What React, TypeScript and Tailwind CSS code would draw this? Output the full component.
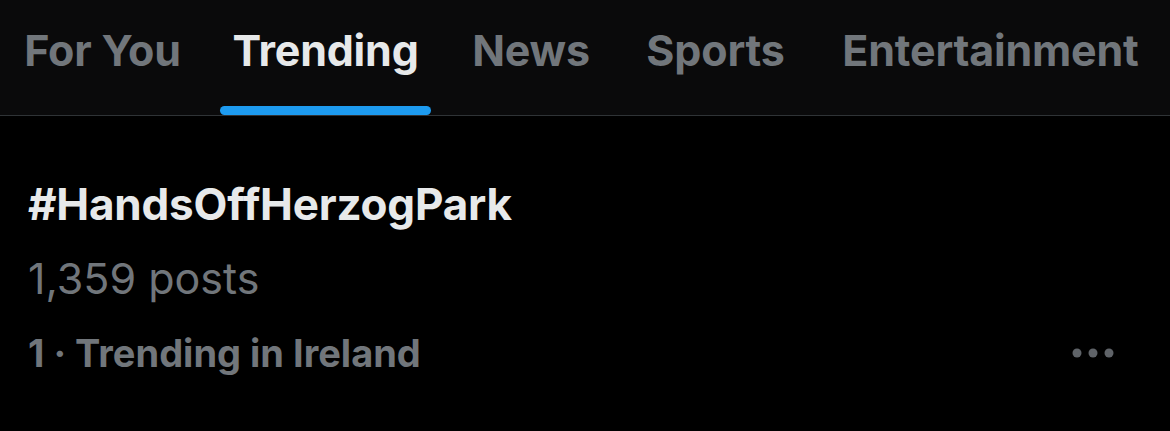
const TABS = [
  { label: "For You", width: "w-[205px]" },
  { label: "Trending", width: "w-[241px]", active: true },
  { label: "News", width: "w-[170px]" },
  { label: "Sports", width: "w-[199px]" },
  { label: "Entertainment", width: "w-[351px]" },
];

function MoreIcon() {
  return (
    <svg width="44" height="12" viewBox="0 0 44 12" fill="#5f6368">
      <circle cx="6" cy="6" r="4.5" />
      <circle cx="22" cy="6" r="4.5" />
      <circle cx="38" cy="6" r="4.5" />
    </svg>
  );
}

export default function App() {
  return (
    <div className="w-[1170px] h-[431px] bg-black overflow-hidden font-['Inter',sans-serif]">
      {/* Tabs */}
      <div className="bg-[#0a0a0b] border-b border-[#2f3336] flex h-[116px]">
        {TABS.map((tab) => (
          <div key={tab.label} className={`${tab.width} flex flex-col items-center`}>
            <div
              className={`pt-[24px] h-[106px] text-[43px] font-bold tracking-[-0.2px] leading-[52px] ${
                tab.active ? "text-[#e7e9ea]" : "text-[#71767b]"
              }`}
            >
              {tab.label}
            </div>
            {tab.active && <div className="w-[211px] h-[9px] rounded-full bg-[#1d9bf0]" />}
          </div>
        ))}
      </div>

      {/* Trend item */}
      <div className="px-[28px] pt-[61px] flex flex-col">
        <div className="text-[44px] font-bold text-[#e7e9ea] leading-[54px] tracking-[-0.2px]">
          #HandsOffHerzogPark
        </div>
        <div className="mt-[22px] text-[43px] text-[#71767b] leading-[50px]">1,359 posts</div>
        <div className="mt-[27px] flex items-center justify-between">
          <div className="text-[38px] font-bold text-[#71767b] leading-[46px]">1 · Trending in Ireland</div>
          <div className="mr-[27px]">
            <MoreIcon />
          </div>
        </div>
      </div>
    </div>
  );
}
